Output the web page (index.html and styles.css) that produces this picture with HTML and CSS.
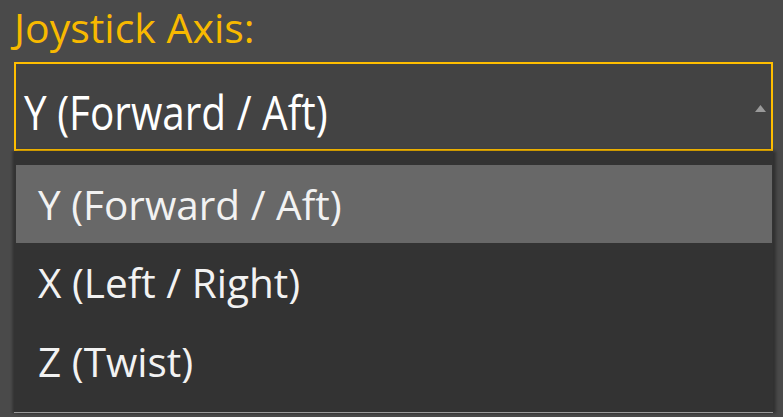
FILE: index.html
```html
<!DOCTYPE html>
<html>
<head>
<meta charset="utf-8">
<link rel="stylesheet" href="styles.css">
</head>
<body>
<div class="field">
  <div class="label">Joystick Axis:</div>
  <div class="select">
    <span class="value">Y (Forward / Aft)</span>
    <svg class="arrow" width="11" height="7" viewBox="0 0 11 7"><polygon points="5.5,0 11,7 0,7" fill="#9a9a9a"/></svg>
  </div>
  <ul class="menu">
    <li class="item active">Y (Forward / Aft)</li>
    <li class="item">X (Left / Right)</li>
    <li class="item">Z (Twist)</li>
  </ul>
</div>
</body>
</html>
```
FILE: styles.css
```css
html, body {
  margin: 0;
  padding: 0;
  background: #4a4a4a;
  height: 100%;
  overflow: hidden;
}
body {
  font-family: "Open Sans", "Noto Sans", sans-serif;
}
.field {
  padding-left: 14px;
  width: 759px;
}
.label {
  color: #f8b900;
  font-size: 41px;
  line-height: 54px;
  height: 62px;
  white-space: nowrap;
}
.select {
  box-sizing: border-box;
  height: 89px;
  border: 2px solid #ffbe00;
  background: #434343;
  display: flex;
  align-items: center;
  justify-content: space-between;
  padding: 0 5px 0 8px;
}
.value {
  color: #ffffff;
  font-size: 40.5px;
  line-height: 56px;
  white-space: nowrap;
  transform: translateY(5px) scaleY(1.18);
}
.arrow {
  display: block;
  margin-top: 4px;
}
.menu {
  list-style: none;
  margin: 0;
  box-sizing: border-box;
  height: 262px;
  padding: 14px 1px 0 2px;
  background: #333333;
  border-bottom: 1px solid #9a9a9a;
  box-shadow: 3px 0 3px rgba(0,0,0,0.35), -2px 0 2px rgba(0,0,0,0.25);
}
.item {
  height: 79px;
  line-height: 79px;
  padding-left: 22px;
  color: #f2f2f2;
  font-size: 40.5px;
  white-space: nowrap;
}
.item.active {
  background: #686868;
  height: 78px;
}
```
